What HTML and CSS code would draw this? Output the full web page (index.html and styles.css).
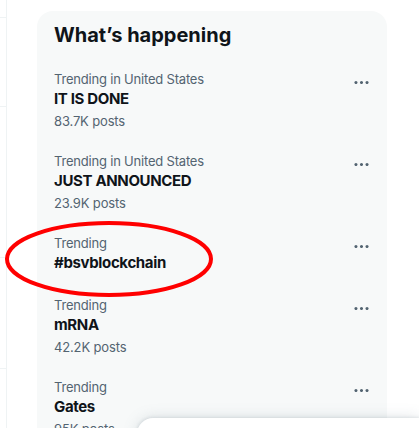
FILE: index.html
```html
<!DOCTYPE html>
<html lang="en">
<head>
<meta charset="utf-8">
<title>What's happening</title>
<link rel="stylesheet" href="styles.css">
</head>
<body>
<div class="page">
  <div class="feed-edge">
    <div class="seg seg1"></div>
    <div class="seg seg2"></div>
    <div class="seg seg3"></div>
    <div class="seg seg4"></div>
    <div class="seg seg5"></div>
  </div>
  <aside class="sidebar">
    <section class="card">
      <h2 class="card-title">What’s happening</h2>
      <div class="trend">
        <div class="trend-text">
          <div class="meta">Trending in United States</div>
          <div class="name">IT IS DONE</div>
          <div class="count">83.7K posts</div>
        </div>
        <button class="more" aria-label="More"><svg viewBox="0 0 24 24"><path d="M3 12c0-1.1.9-2 2-2s2 .9 2 2-.9 2-2 2-2-.9-2-2zm9 2c1.1 0 2-.9 2-2s-.9-2-2-2-2 .9-2 2 .9 2 2 2zm7 0c1.1 0 2-.9 2-2s-.9-2-2-2-2 .9-2 2 .9 2 2 2z"/></svg></button>
      </div>
      <div class="trend">
        <div class="trend-text">
          <div class="meta">Trending in United States</div>
          <div class="name">JUST ANNOUNCED</div>
          <div class="count">23.9K posts</div>
        </div>
        <button class="more" aria-label="More"><svg viewBox="0 0 24 24"><path d="M3 12c0-1.1.9-2 2-2s2 .9 2 2-.9 2-2 2-2-.9-2-2zm9 2c1.1 0 2-.9 2-2s-.9-2-2-2-2 .9-2 2 .9 2 2 2zm7 0c1.1 0 2-.9 2-2s-.9-2-2-2-2 .9-2 2 .9 2 2 2z"/></svg></button>
      </div>
      <div class="trend">
        <div class="trend-text">
          <div class="meta">Trending</div>
          <div class="name">#bsvblockchain</div>
        </div>
        <button class="more" aria-label="More"><svg viewBox="0 0 24 24"><path d="M3 12c0-1.1.9-2 2-2s2 .9 2 2-.9 2-2 2-2-.9-2-2zm9 2c1.1 0 2-.9 2-2s-.9-2-2-2-2 .9-2 2 .9 2 2 2zm7 0c1.1 0 2-.9 2-2s-.9-2-2-2-2 .9-2 2 .9 2 2 2z"/></svg></button>
      </div>
      <div class="trend">
        <div class="trend-text">
          <div class="meta">Trending</div>
          <div class="name">mRNA</div>
          <div class="count">42.2K posts</div>
        </div>
        <button class="more" aria-label="More"><svg viewBox="0 0 24 24"><path d="M3 12c0-1.1.9-2 2-2s2 .9 2 2-.9 2-2 2-2-.9-2-2zm9 2c1.1 0 2-.9 2-2s-.9-2-2-2-2 .9-2 2 .9 2 2 2zm7 0c1.1 0 2-.9 2-2s-.9-2-2-2-2 .9-2 2 .9 2 2 2z"/></svg></button>
      </div>
      <div class="trend">
        <div class="trend-text">
          <div class="meta">Trending</div>
          <div class="name">Gates</div>
          <div class="count">95K posts</div>
        </div>
        <button class="more" aria-label="More"><svg viewBox="0 0 24 24"><path d="M3 12c0-1.1.9-2 2-2s2 .9 2 2-.9 2-2 2-2-.9-2-2zm9 2c1.1 0 2-.9 2-2s-.9-2-2-2-2 .9-2 2 .9 2 2 2zm7 0c1.1 0 2-.9 2-2s-.9-2-2-2-2 .9-2 2 .9 2 2 2z"/></svg></button>
      </div>
    </section>
  </aside>
</div>
<svg class="annotation" viewBox="0 0 212 80" aria-hidden="true"><ellipse cx="106" cy="40" rx="102" ry="36"/></svg>
<div class="drawer"></div>
</body>
</html>
```

FILE: styles.css
```css
html, body {
  margin: 0;
  padding: 0;
  background: #ffffff;
  overflow: hidden;
}
body {
  width: 419px;
  height: 428px;
  position: relative;
  font-family: Inter, "Liberation Sans", sans-serif;
  color: #0f1419;
}
.page {
  display: flex;
  align-items: flex-start;
  height: 428px;
}
.feed-edge {
  width: 6px;
  height: 428px;
  border-right: 1px solid #eff3f4;
  flex: none;
  display: flex;
  flex-direction: column;
}
.seg {
  border-bottom: 1px solid #eff3f4;
  flex: none;
}
.seg1 { height: 17px; }
.seg2 { height: 88px; }
.seg3 { height: 150px; }
.seg4 { height: 110px; }
.seg5 { border-bottom: 0; flex: 1; }
.sidebar {
  padding: 11px 0 0 30px;
  flex: none;
}
.card {
  width: 350px;
  background: #f7f9f9;
  border-radius: 16px;
  padding-bottom: 20px;
}
.card-title {
  margin: 0;
  padding: 12px 16px 12px 17px;
  font-size: 20px;
  line-height: 24px;
  font-weight: 700;
  color: #0f1419;
}
.trend {
  display: flex;
  justify-content: space-between;
  align-items: flex-start;
  padding: 12px 16px 12px 17px;
}
.meta {
  font-size: 13px;
  line-height: 16px;
  letter-spacing: -0.2px;
  color: #536471;
}
.name {
  padding-top: 2px;
  font-size: 15px;
  line-height: 20px;
  font-weight: 700;
  letter-spacing: -0.35px;
  color: #0f1419;
}
.count {
  padding-top: 4px;
  font-size: 13px;
  line-height: 16px;
  letter-spacing: -0.15px;
  color: #536471;
}
.more {
  border: 0;
  background: transparent;
  padding: 0;
  margin: 2px 0 0 0;
  width: 19px;
  height: 19px;
  display: flex;
}
.more svg {
  width: 19px;
  height: 19px;
  fill: #536471;
}
.annotation {
  position: absolute;
  left: 3px;
  top: 219px;
  width: 212px;
  height: 80px;
  overflow: visible;
}
.annotation ellipse {
  fill: none;
  stroke: #ff0000;
  stroke-width: 4;
}
.drawer {
  position: absolute;
  left: 137px;
  top: 418px;
  right: 0;
  height: 60px;
  background: #ffffff;
  border-radius: 16px 0 0 0;
  box-shadow: rgba(101, 119, 134, 0.2) 0 0 15px, rgba(101, 119, 134, 0.15) 0 0 3px 1px;
}
```
